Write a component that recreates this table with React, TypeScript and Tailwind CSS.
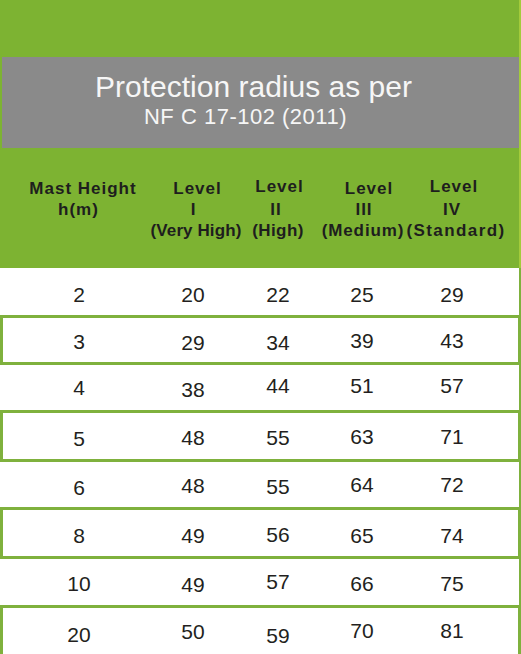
import React from "react";

type Cell = [string, string];
type Row = { h: string; boxed: boolean; cells: Cell[] };

const rows: Row[] = [
  { h: "h-[47px]", boxed: false, cells: [["2", "pt-[16px]"], ["20", "pt-[16px]"], ["22", "pt-[16px]"], ["25", "pt-[16px]"], ["29", "pt-[16px]"]] },
  { h: "h-[50px]", boxed: true, cells: [["3", "pt-[16px]"], ["29", "pt-[17px]"], ["34", "pt-[17px]"], ["39", "pt-[15px]"], ["43", "pt-[15px]"]] },
  { h: "h-[45px]", boxed: false, cells: [["4", "pt-[12px]"], ["38", "pt-[14px]"], ["44", "pt-[10px]"], ["51", "pt-[10px]"], ["57", "pt-[10px]"]] },
  { h: "h-[52px]", boxed: true, cells: [["5", "pt-[18px]"], ["48", "pt-[17px]"], ["55", "pt-[17px]"], ["63", "pt-[16px]"], ["71", "pt-[16px]"]] },
  { h: "h-[45px]", boxed: false, cells: [["6", "pt-[15px]"], ["48", "pt-[13px]"], ["55", "pt-[14px]"], ["64", "pt-[12px]"], ["72", "pt-[12px]"]] },
  { h: "h-[52px]", boxed: true, cells: [["8", "pt-[18px]"], ["49", "pt-[18px]"], ["56", "pt-[17px]"], ["65", "pt-[18px]"], ["74", "pt-[18px]"]] },
  { h: "h-[46px]", boxed: false, cells: [["10", "pt-[14px]"], ["49", "pt-[15px]"], ["57", "pt-[12px]"], ["66", "pt-[14px]"], ["75", "pt-[14px]"]] },
  { h: "h-[52px]", boxed: true, cells: [["20", "pt-[19px]"], ["50", "pt-[16px]"], ["59", "pt-[20px]"], ["70", "pt-[15px]"], ["81", "pt-[15px]"]] },
];

const colW = ["w-[158px]", "w-[70px]", "w-[100px]", "w-[68px]", "w-[112px]"];

type HLine = { t: string; c: string };
const headCols: { w: string; lines: HLine[] }[] = [
  {
    w: "w-[166px]",
    lines: [
      { t: "Mast Height", c: "tracking-[1px]" },
      { t: "h(m)", c: "tracking-[1px] pr-[9px]" },
    ],
  },
  {
    w: "w-[60px]",
    lines: [
      { t: "Level", c: "tracking-[1px] pl-[3px]" },
      { t: "I", c: "pr-[6px]" },
      { t: "(Very High)", c: "tracking-[0.1px]" },
    ],
  },
  {
    w: "w-[106px]",
    lines: [
      { t: "Level", c: "tracking-[1px] pl-[1px] -mt-[2px] mb-[2px]" },
      { t: "II", c: "tracking-[1px] pr-[6px]" },
      { t: "(High)", c: "tracking-[0.4px] pr-[2px]" },
    ],
  },
  {
    w: "w-[68px]",
    lines: [
      { t: "Level", c: "tracking-[1px] pl-[6px]" },
      { t: "III", c: "tracking-[1px] pr-[4px]" },
      { t: "(Medium)", c: "tracking-[0.9px] pr-[6px]" },
    ],
  },
  {
    w: "w-[110px]",
    lines: [
      { t: "Level", c: "tracking-[1px] pr-[2px] -mt-[2px] mb-[2px]" },
      { t: "IV", c: "tracking-[1px] pr-[6px]" },
      { t: "(Standard)", c: "tracking-[1.4px] pl-[2px]" },
    ],
  },
];

export default function App() {
  return (
    <div className="w-[521px] h-[654px] overflow-hidden bg-white [font-family:'Liberation_Sans',Arial,sans-serif]">
      {/* Header block */}
      <div className="bg-[#7db332] border-r-2 border-[#a3cb3b] pt-[57px]">
        <div className="ml-[2px] h-[91px] bg-[#8a8a8a] text-[#f6f6f6] flex flex-col items-center pt-[15px]">
          <div className="text-[30px] leading-[30px] pr-[14px] whitespace-nowrap">
            Protection radius as per
          </div>
          <div className="text-[22px] leading-[24px] mt-[3px] pr-[30px] tracking-[0.5px] whitespace-nowrap">
            NF C 17-102 (2011)
          </div>
        </div>
        <div className="h-[120px] flex pt-[30px] text-[17px] leading-[21px] font-bold text-[#1e1e1e]">
          {headCols.map((col, i) => (
            <div key={i} className={`${col.w} flex flex-col items-center`}>
              {col.lines.map((l, j) => (
                <div key={j} className={`whitespace-nowrap ${l.c}`}>
                  {l.t}
                </div>
              ))}
            </div>
          ))}
        </div>
      </div>

      {/* Data rows */}
      <div className="text-[21px] leading-[21px] text-[#231f20]">
        {rows.map((r, i) => (
          <div
            key={i}
            className={`${r.h} flex ${
              r.boxed
                ? "shadow-[inset_0_0_0_3px_#7fb13d]"
                : "shadow-[inset_-2px_0_0_#7fb13d]"
            }`}
          >
            {r.cells.map((c, j) => (
              <div key={j} className={`${colW[j]} text-center ${c[1]}`}>
                {c[0]}
              </div>
            ))}
          </div>
        ))}
      </div>
    </div>
  );
}
